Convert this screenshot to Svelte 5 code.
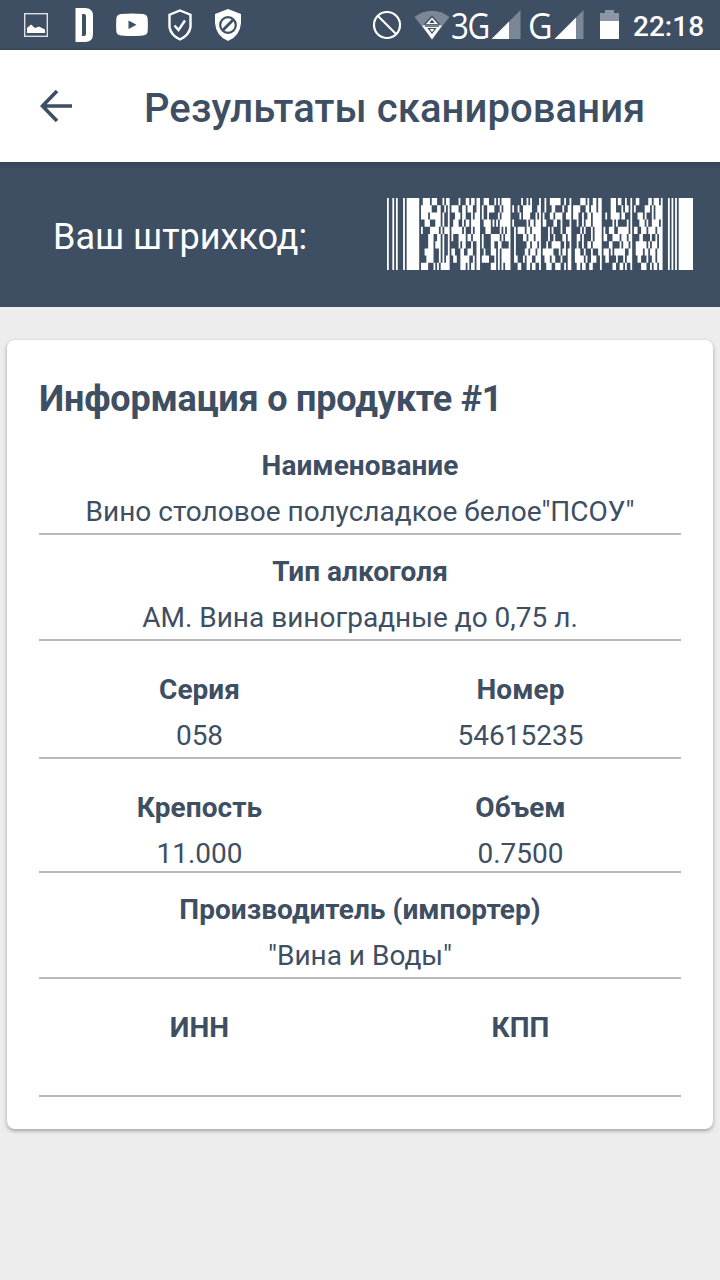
<script lang="ts">
  type Field = { label : string, value : string }


  const product : Field[][] = [
    [{ label: "Наименование", value: "Вино столовое полусладкое белое\"ПСОУ\"" }],
    [{ label: "Тип алкоголя", value: "АМ. Вина виноградные до 0,75 л." }],
    [{ label: "Серия", value: "058" }, { label: "Номер", value: "54615235" }],
    [{ label: "Крепость", value: "11.000" }, { label: "Объем", value: "0.7500" }],
    [{ label: "Производитель (импортер)", value: "\"Вина и Воды\"" }],
    [{ label: "ИНН", value: "" }, { label: "КПП", value: "" }],
  ]


  // run lengths, alternating dark and light, 17 modules per codeword
  const codewords = [
    "24133112 51321212 23311115 61211141 21262121 53112212 53122121 22521311",
    "16322111 14221322 11243114 11212532 21324122 14321312 53311211 11531114",
    "14161121 33123113 11215115 51143111 11321423 13212215 21251231 33113114",
    "33331121 23211215 24111116 11711213 12422141 31211315 61115111 43112411",
    "11451113 16113113 33511112 21141215 41114123 51113114 11232611 12231413",
    "53221121 11341214 11451113 21421313 41214212 32114114 12341312 42412112",
    "53131121 51123122 11422241 21621311 31252121 31212215 42411311 26111312",
    "35311121 12322322 21331115 21521312 16311212 23213132 13111622 24121313",
    "44311112 22252112 14311115 22311323 23123132 25112321 22413113 32312213",
    "14311115 63111212 63111113 42321221 33232112 32122241 62221121 53211212",
  ]

  const left_guard = "121113117"

  const right_guard = "31111118"


  function row_path(row : string, y : number) : string {
    const runs = left_guard + row.replaceAll(" ", "") + right_guard
    let x = 0
    let path = ""
    for (let i = 0; i < runs.length; i++) {
      const width = Number(runs[i])
      if (i % 2 === 0) {
        path += `M${x} ${y}h${width}v1h-${width}z`
      }
      x += width
    }
    return path
  }


  const barcode = codewords.map(row_path).join("")
</script>


<div class="screen">
  <div class="status-bar">
    <svg width="250" height="50" viewBox="0 0 250 50">
      <rect x="24.7" y="13.7" width="22.6" height="22.6" fill="none" stroke="#dce0e4" stroke-width="1.4" />
      <path d="M27 33v-5l4-3.5 4 3.5 4-1.5 6 3v3.5z" fill="#fff" />
      <path fill-rule="evenodd" d="M75.5 8H85q8 0 8 8v18q0 8-8 8h-9.5zM82 14v22h2q2 0 2-2V16q0-2-2-2z" fill="#fff" />
      <path fill-rule="evenodd" d="M121 14q11-1 22 0 4.5.5 4.700 5 .4 6 0 12-.2 4-4.700 4.500-11 1-22 0-4.500-.5-4.700-4.500-.4-6 0-12 .2-4.500 4.700-5zM128.500 20.500v8.500l8-4.200z" fill="#fff" />
      <path d="M180 10.5l10.5 4.200v12.500q-1.500 8-10.500 12.300-9-4.300-10.500-12.300V14.700z" fill="none" stroke="#fff" stroke-width="2.400" />
      <path d="M174.500 25.500l4 4.500 6.500-9.500" fill="none" stroke="#fff" stroke-width="2.400" />
      <path d="M228 9l13 5v9q-1 13-13 18-12-5-13-18v-9z" fill="#fff" />
      <circle cx="228" cy="25" r="7.800" fill="none" stroke="#3e4e63" stroke-width="2.200" />
      <path d="M223 30l10-10" stroke="#3e4e63" stroke-width="2.800" />
    </svg>
    <div class="indicators">
      <svg width="81" height="50" viewBox="370 0 81 50">
        <circle cx="387" cy="25" r="13" fill="none" stroke="#fff" stroke-width="2.200" />
        <path d="M378 16l18 18" stroke="#fff" stroke-width="2.200" />
        <path d="M414.5 17q17.5-12.5 35 0L432 39.500z" fill="#7b8796" />
        <path d="M432 15.500l8.500 9h-17z" fill="#3e4e63" />
        <path d="M432 17.500l6 6.500h-12z" fill="#fff" />
        <path d="M422 25.500h20L432 39.500z" fill="#fff" />
        <path d="M425 26.200h14M432 20.500l1.500 2h-3z" stroke="#3e4e63" stroke-width="1.200" fill="#3e4e63" />
        <path d="M428.500 28.500h7L432 33z" fill="none" stroke="#3e4e63" stroke-width="1.200" />
      </svg>
      <span class="network network-3g">3G</span>
      <svg width="30" height="50" viewBox="491 0 30 50">
        <path d="M520.500 10v29H509V21.500z" fill="#7b8796" />
        <path d="M509 21.500V39h-17.500z" fill="#fff" />
      </svg>
      <span class="network network-g">G</span>
      <svg width="66" height="50" viewBox="554 0 66 50">
        <path d="M583.500 10v29H576V17.500z" fill="#7b8796" />
        <path d="M576 17.500V39h-21.500z" fill="#fff" />
        <path d="M600 13h5v-3h9v3h5v8h-19z" fill="#8d97a4" />
        <path d="M600 21h19v18h-19z" fill="#fff" />
      </svg>
      <span class="clock">22:18</span>
    </div>
  </div>

  <header>
    <svg class="back" width="34" height="34" viewBox="0 0 34 34">
      <path d="M18 2L3.500 17 18 32M4 17h29" />
    </svg>
    <h1>Результаты сканирования</h1>
  </header>

  <div class="code-band">
    <span class="code-label">Ваш штрихкод:</span>
    <svg width="306" height="72" viewBox="0 0 171 10" preserveAspectRatio="none">
      <path d={barcode} fill="#fff" />
    </svg>
  </div>

  <section class="card">
    <h2>Информация о продукте #1</h2>
    {#each product as fields, i}
      <div class="row row-{i}">
        {#each fields as field}
          <div class="field">
            <div class="label">{field.label}</div>
            <div class="value">{field.value}</div>
          </div>
        {/each}
      </div>
    {/each}
  </section>
</div>


<style>
  :global(body) {
    background: #ededed;
  }


  .screen {
    height: 1280px;
    overflow: hidden;
    font-family: Roboto, sans-serif;
    color: #3e4e63;
    background: #ededed;
  }


  svg {
    display: block;
    flex: none;
  }


  .status-bar {
    display: flex;
    justify-content: space-between;
    height: 50px;
    color: #fff;
    background: linear-gradient(#3e4e63 47px, #384557);
  }


  .indicators {
    display: flex;
    width: 350px;
  }


  .network {
    font-family: "Open Sans", sans-serif;
    font-size: 36px;
    line-height: 51px;
    letter-spacing: -1.5px;
    transform: scaleX(0.87);
    transform-origin: left;
  }


  .network-3g {
    width: 40px;
  }


  .network-g {
    width: 26px;
    margin-left: 7px;
    transform: scaleX(0.94);
  }


  .clock {
    margin-left: 13px;
    font-size: 28px;
    font-weight: 500;
    line-height: 53px;
  }


  header {
    display: flex;
    align-items: center;
    height: 112px;
    background: #fff;
  }


  .back {
    margin-left: 39px;
    fill: none;
    stroke: #3e4e63;
    stroke-width: 3.6;
  }


  h1 {
    margin: 4px 0 0 71px;
    font-size: 40px;
    font-weight: 500;
    letter-spacing: 0.09px;
    white-space: nowrap;
  }


  .code-band {
    display: flex;
    align-items: center;
    justify-content: space-between;
    box-sizing: border-box;
    height: 145px;
    padding: 0 27px 2px 53px;
    color: #fff;
    font-size: 36px;
    background: linear-gradient(#364356, #3e4e63 7px);
  }


  .code-label {
    padding-top: 6px;
  }


  .card {
    box-sizing: border-box;
    height: 789px;
    margin: 33px 7px 0;
    padding: 32px;
    border-radius: 8px;
    background: #fff;
    box-shadow: 0 2px 4px rgba(0, 0, 0, 0.32);
  }


  h2 {
    height: 54px;
    margin: 0;
    font-size: 36px;
    line-height: 54px;
    letter-spacing: -0.2px;
    white-space: nowrap;
  }


  .row {
    display: flex;
    box-sizing: border-box;
    height: 118px;
    padding-top: 26px;
    border-bottom: 2px solid #bababa;
  }


  .row-0 {
    height: 109px;
    padding-top: 17px;
  }


  .row-1,
  .row-4 {
    height: 106px;
    padding-top: 14px;
  }


  .row-3 {
    height: 114px;
  }


  .field {
    flex: 1;
    text-align: center;
    font-size: 28px;
    line-height: 46px;
    white-space: nowrap;
  }


  .label {
    font-weight: 700;
    letter-spacing: 0.05px;
  }


  .value {
    height: 46px;
  }
</style>
